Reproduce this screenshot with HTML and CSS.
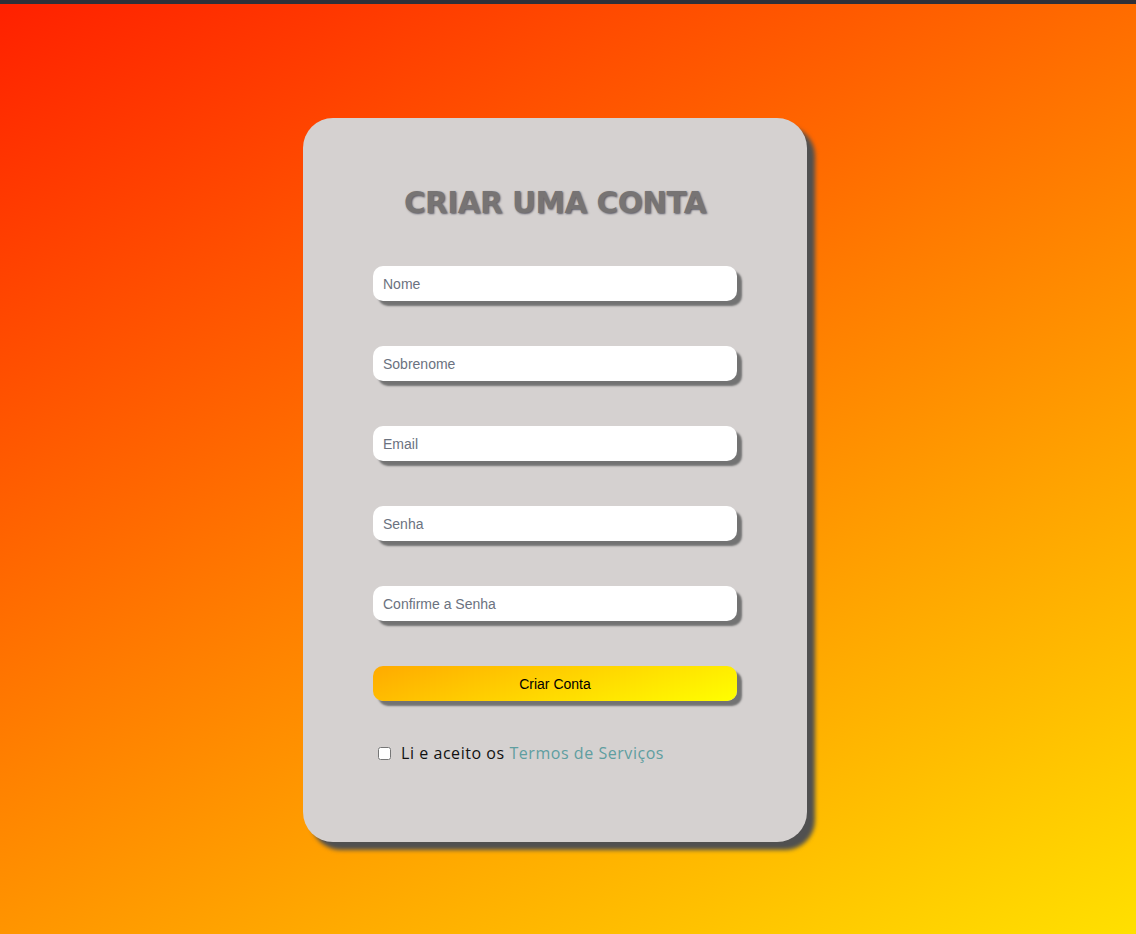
FILE: index.html
```html
<!DOCTYPE html>
<html lang="pt-BR">
<head>
<meta charset="utf-8">
<title>Criar uma conta</title>
<link rel="stylesheet" href="styles.css">
</head>
<body>
<div class="topbar"></div>
<main class="page">
  <section class="card">
    <h1 class="title">CRIAR UMA CONTA</h1>
    <form class="form">
      <input class="field" type="text" placeholder="Nome">
      <input class="field" type="text" placeholder="Sobrenome">
      <input class="field" type="email" placeholder="Email">
      <input class="field" type="password" placeholder="Senha">
      <input class="field" type="password" placeholder="Confirme a Senha">
      <button class="submit" type="button">Criar Conta</button>
      <label class="terms"><input class="check" type="checkbox"><span>Li e aceito os <a class="link" href="#">Termos de Serviços</a></span></label>
    </form>
  </section>
</main>
</body>
</html>
```

FILE: styles.css
```css
html, body {
  margin: 0;
  padding: 0;
}
body {
  min-height: 934px;
  background: linear-gradient(152deg, #ff2000 0%, #ffe000 100%);
  font-family: "Liberation Sans", Arial, sans-serif;
}
.topbar {
  height: 4px;
  background: #2f3038;
}
.page {
  display: flex;
  justify-content: center;
  padding-top: 114px;
  padding-right: 26px;
}
.card {
  box-sizing: border-box;
  width: 504px;
  height: 724px;
  background: #d5d1d0;
  border-radius: 30px;
  box-shadow: 8px 8px 4px #505050;
  padding: 61px 70px 0;
}
.title {
  margin: 0 0 39px;
  text-align: center;
  font-family: "DejaVu Sans", sans-serif;
  font-weight: 700;
  font-size: 29.5px;
  line-height: 48px;
  color: #777474;
  text-shadow: 1px 1px 2px #5a5a66;
  letter-spacing: -0.5px;
}
.form {
  display: flex;
  flex-direction: column;
  gap: 45px;
}
.field {
  box-sizing: border-box;
  width: 364px;
  height: 35px;
  border: none;
  border-radius: 10px;
  background: #fff;
  box-shadow: 5px 5px 2px #737373;
  padding: 0 10px;
  font-family: "Liberation Sans", Arial, sans-serif;
  font-size: 14px;
  outline: none;
}
.field::placeholder {
  color: #6b7280;
}
.submit {
  width: 364px;
  height: 35px;
  border: none;
  border-radius: 10px;
  background: linear-gradient(160deg, #ffaa00 0%, #ffff00 100%);
  box-shadow: 5px 5px 2px #737373;
  font-family: "Liberation Sans", Arial, sans-serif;
  font-size: 14px;
  color: #000;
  padding: 0;
}
.terms {
  display: flex;
  align-items: center;
  gap: 10px;
  margin-top: -4px;
  padding-left: 5px;
  font-family: "Open Sans", sans-serif;
  font-size: 16px;
  letter-spacing: 0.55px;
  color: #111;
}
.check {
  margin: 0;
  width: 13px;
  height: 13px;
}
.link {
  color: #5f9ea0;
  text-decoration: none;
}
```
